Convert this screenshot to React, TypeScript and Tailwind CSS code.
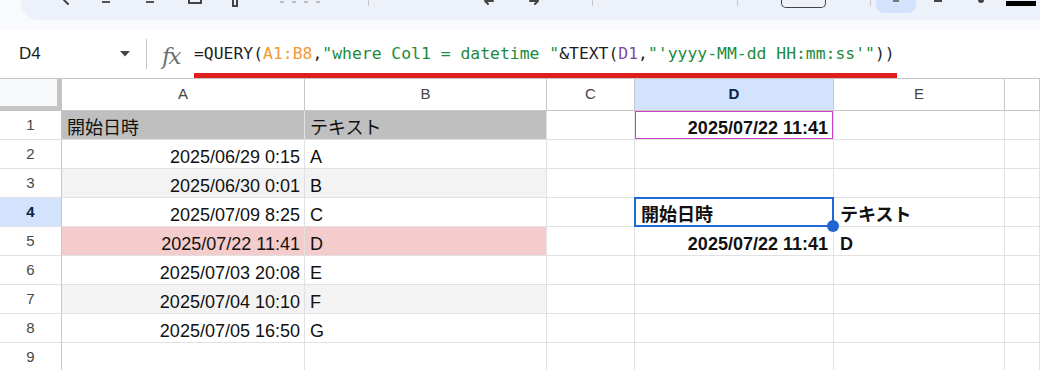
import React from "react";

type Row = {
  a: string;
  b: string;
  fill?: string;
  aLeft?: boolean;
};

const rows: Row[] = [
  { a: "開始日時", b: "テキスト", fill: "bg-[#bfbfbf]", aLeft: true },
  { a: "2025/06/29 0:15", b: "A" },
  { a: "2025/06/30 0:01", b: "B", fill: "bg-[#f3f3f3]" },
  { a: "2025/07/09 8:25", b: "C" },
  { a: "2025/07/22 11:41", b: "D", fill: "bg-[#f4cccc]" },
  { a: "2025/07/03 20:08", b: "E" },
  { a: "2025/07/04 10:10", b: "F", fill: "bg-[#f3f3f3]" },
  { a: "2025/07/05 16:50", b: "G" },
  { a: "", b: "" },
];

const gridCols = "grid grid-cols-[62px_243px_242px_88px_199px_171px_1fr]";
const cell = "border-r border-b border-[#e1e1e1] flex items-end pb-[1px] leading-[20px] text-[18px] text-[#111] whitespace-nowrap overflow-visible";

function Toolbar() {
  return (
    <div className="h-[30px] bg-[#f8fafd]">
      <div className="ml-[20px] h-[20px] bg-[#edf2fa] rounded-bl-[20px] flex items-start">
        {/* icon fragments cut off by the top edge */}
        <svg className="ml-[42px]" width="10" height="5" viewBox="0 0 10 5">
          <path d="M2 0 L6 4" stroke="#444" strokeWidth="2" strokeLinecap="round" />
        </svg>
        <div className="ml-[30px] mt-[1px] w-[8px] h-[2px] bg-[#555]" />
        <div className="ml-[36px] mt-[1px] w-[8px] h-[2px] bg-[#555]" />
        <div className="ml-[34px] w-[14px] h-[4px] border-2 border-t-0 border-[#444] rounded-b-[1px]" />
        <div className="ml-[30px] w-[6px] h-[7px] border-2 border-t-0 border-[#444]" />
        <div className="ml-[42px] mt-[1px] flex gap-[8px]">
          <div className="w-[4px] h-[2px] bg-[#bbb]" />
          <div className="w-[4px] h-[2px] bg-[#bbb]" />
          <div className="w-[4px] h-[2px] bg-[#bbb]" />
          <div className="w-[4px] h-[2px] bg-[#bbb]" />
        </div>
        <div className="ml-[48px] w-px h-[6px] bg-[#c7c7c7]" />
        <svg className="ml-[114px]" width="12" height="5" viewBox="0 0 12 5">
          <path d="M2 1 H10 M2 1 L5 4" stroke="#444" strokeWidth="2" fill="none" strokeLinecap="round" />
        </svg>
        <svg className="ml-[33px]" width="12" height="5" viewBox="0 0 12 5">
          <path d="M2 1 H10 M10 1 L7 4" stroke="#444" strokeWidth="2" fill="none" strokeLinecap="round" />
        </svg>
        <div className="ml-[52px] w-px h-[6px] bg-[#c7c7c7]" />
        <div className="ml-[144px] w-px h-[6px] bg-[#c7c7c7]" />
        <div className="ml-[43px] w-[45px] h-[8px] border border-t-0 border-[#444] rounded-b-[5px]" />
        <div className="ml-[44px] w-px h-[6px] bg-[#c7c7c7]" />
        <div className="ml-[5px] w-[40px] h-[13px] bg-[#d3e3fd] rounded-b-[8px] flex justify-center">
          <div className="w-[6px] h-[2px] bg-[#777]" />
        </div>
        <div className="ml-[18px] w-[8px] h-[2px] bg-[#444]" />
        <div className="ml-[36px] w-[6px] h-[3px] bg-[#444] rounded-b-[3px]" />
        <div className="ml-[22px] mt-[1px] w-[30px] h-[5px] bg-black" />
      </div>
    </div>
  );
}

function FormulaBar() {
  return (
    <div className="h-[49px] border-b border-[#c7c7c7] bg-white flex items-center">
      <div className="pl-[19px] w-[120px] text-[17px] text-[#1f1f1f] leading-[20px]">D4</div>
      <svg width="10" height="6" viewBox="0 0 10 6">
        <path d="M0 0 H10 L5 5.5 Z" fill="#444" />
      </svg>
      <div className="ml-[16px] w-px h-[30px] bg-[#c7c7c7]" />
      <div className="ml-[15px] w-[19px] text-[23px] leading-[20px] italic text-[#707070] font-['DejaVu_Serif',serif] mt-[4px] tracking-[-2px]">
        fx
      </div>
      <div className="relative ml-[13px] font-['DejaVu_Sans_Mono',monospace] text-[16.4px] leading-[20px] text-[#1f1f1f] whitespace-nowrap">
        <span>=QUERY(</span>
        <span className="text-[#f29b36]">A1:B8</span>
        <span>,</span>
        <span className="text-[#1d8a3c]">"where Col1 = datetime "</span>
        <span>&amp;TEXT(</span>
        <span className="text-[#7e4c9f]">D1</span>
        <span>,</span>
        <span className="text-[#1d8a3c]">"'yyyy-MM-dd HH:mm:ss'"</span>
        <span>))</span>
        <div className="absolute left-0 top-[29px] w-[703px] h-[5px] bg-[#de1d1d]" />
      </div>
    </div>
  );
}

function HeaderRow() {
  const letters = ["A", "B", "C", "D", "E", ""];
  return (
    <div className={`${gridCols} h-[32px]`}>
      <div className="bg-[#f8f9fa] border-r-[5px] border-b-[5px] border-[#c4c4c4]" />
      {letters.map((l) => (
        <div
          key={l || "F"}
          className={`border-r border-b border-[#c7c7c7] flex items-center justify-center text-[15px] ${
            l === "D" ? "bg-[#d3e3fd] font-bold text-[#0b1f47]" : "bg-white text-[#444]"
          }`}
        >
          {l}
        </div>
      ))}
    </div>
  );
}

function DataRow({ row, index }: { row: Row; index: number }) {
  const n = index + 1;
  const fill = row.fill ?? "bg-white";
  return (
    <div className={`${gridCols} h-[29px]`}>
      <div
        className={`border-r border-b border-r-[#c7c7c7] border-b-[#e1e1e1] flex items-center justify-center text-[15px] ${
          n === 4 ? "bg-[#d3e3fd] font-bold text-[#0b1f47]" : "bg-white text-[#474747]"
        }`}
      >
        {n}
      </div>
      <div className={`${cell} ${fill} ${row.aLeft ? "pl-[5px]" : "justify-end pr-[4px]"}`}>{row.a}</div>
      <div className={`${cell} ${fill} pl-[5px]`}>{row.b}</div>
      <div className={cell} />
      {n === 1 ? (
        <div className={`${cell} justify-end pr-[5px] font-bold shadow-[inset_0_0_0_1px_#cc43cc]`}>2025/07/22 11:41</div>
      ) : n === 4 ? (
        <div className={`${cell} relative pl-[6px] font-bold`}>
          開始日時
          <div className="absolute -left-px -top-px -right-px -bottom-px border-2 border-[#1f6ad3]" />
          <div className="absolute -right-[6px] -bottom-[6px] w-[12px] h-[12px] rounded-full bg-[#1f64d0]" />
        </div>
      ) : n === 5 ? (
        <div className={`${cell} justify-end pr-[5px] font-bold`}>2025/07/22 11:41</div>
      ) : (
        <div className={cell} />
      )}
      {n === 4 ? (
        <div className={`${cell} pl-[6px] font-bold`}>テキスト</div>
      ) : n === 5 ? (
        <div className={`${cell} pl-[6px] font-bold`}>D</div>
      ) : (
        <div className={cell} />
      )}
      <div className={cell} />
    </div>
  );
}

export default function App() {
  return (
    <div className="w-[1040px] h-[370px] overflow-hidden bg-white font-['Liberation_Sans','Noto_Sans_CJK_JP',Arial,sans-serif]">
      <Toolbar />
      <FormulaBar />
      <HeaderRow />
      {rows.map((r, i) => (
        <DataRow key={i} row={r} index={i} />
      ))}
    </div>
  );
}
